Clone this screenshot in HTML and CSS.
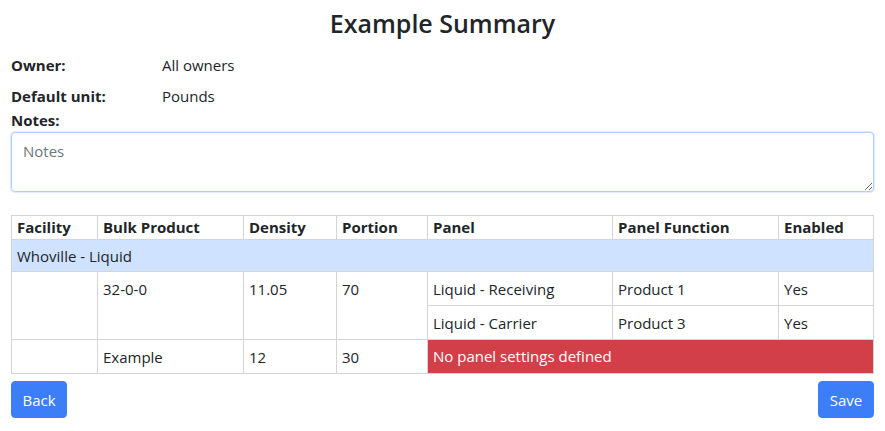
FILE: index.html
```html
<!DOCTYPE html>
<html lang="en">
<head>
<meta charset="utf-8">
<title>Example Summary</title>
<link rel="stylesheet" href="styles.css">
</head>
<body>
<main class="page">
  <h1 class="title">Example Summary</h1>
  <div class="info-row"><span class="info-label">Owner:</span><span class="info-value">All owners</span></div>
  <div class="info-row second"><span class="info-label">Default unit:</span><span class="info-value">Pounds</span></div>
  <label class="notes-label" for="notes">Notes:</label>
  <textarea id="notes" class="notes" placeholder="Notes"></textarea>
  <table class="summary">
    <colgroup>
      <col class="c1"><col class="c2"><col class="c3"><col class="c4"><col class="c5"><col class="c6"><col class="c7">
    </colgroup>
    <thead>
      <tr><th>Facility</th><th>Bulk Product</th><th>Density</th><th>Portion</th><th>Panel</th><th>Panel Function</th><th>Enabled</th></tr>
    </thead>
    <tbody>
      <tr class="group"><td colspan="7">Whoville - Liquid</td></tr>
      <tr><td rowspan="2"></td><td rowspan="2">32-0-0</td><td rowspan="2">11.05</td><td rowspan="2">70</td><td>Liquid - Receiving</td><td>Product 1</td><td>Yes</td></tr>
      <tr><td>Liquid - Carrier</td><td>Product 3</td><td>Yes</td></tr>
      <tr><td></td><td>Example</td><td>12</td><td>30</td><td colspan="3" class="danger">No panel settings defined</td></tr>
    </tbody>
  </table>
  <div class="actions">
    <button class="btn" type="button">Back</button>
    <button class="btn" type="button">Save</button>
  </div>
</main>
</body>
</html>
```

FILE: styles.css
```css
* { box-sizing: border-box; }
body {
  margin: 0;
  font-family: "Open Sans", "Noto Sans", sans-serif;
  font-size: 15px;
  color: #212529;
  background: #fff;
}
.page {
  padding: 0 11px;
}
.title {
  margin: 0;
  padding-top: 5px;
  height: 51px;
  text-align: center;
  font-size: 25px;
  font-weight: 600;
  line-height: 36px;
}
.info-row {
  display: flex;
  height: 28px;
  align-items: center;
}
.info-row.second {
  height: 34px;
}
.info-label {
  width: 151px;
  font-weight: 700;
}
.notes-label {
  display: block;
  font-weight: 700;
  line-height: 16px;
  height: 16px;
  margin-top: -1px;
}
.notes {
  display: block;
  width: 100%;
  height: 60px;
  margin: 4px 0 23px;
  padding: 8px 11px 5px;
  font: inherit;
  color: #212529;
  border: 1px solid #b3cdf8;
  border-radius: 4px;
  box-shadow: 0 0 0 1px rgba(13,110,253,0.12);
  outline: none;
  resize: vertical;
}
.notes::placeholder { color: #6c757d; opacity: 1; }
.summary {
  width: 100%;
  border-collapse: collapse;
  table-layout: fixed;
}
.c1 { width: 86px; }
.c2 { width: 146px; }
.c3 { width: 93px; }
.c4 { width: 91px; }
.c5 { width: 185px; }
.c6 { width: 166px; }
.c7 { width: auto; }
.summary th, .summary td {
  border: 1px solid #d4d4d4;
  text-align: left;
  vertical-align: top;
  padding: 0 5px;
  white-space: nowrap;
}
.summary th {
  height: 24px;
  line-height: 22px;
  font-weight: 700;
}
.summary td {
  height: 34px;
  line-height: 22px;
  padding-top: 6px;
}
.summary tr.group td {
  background: #cfe2ff;
  height: 32px;
  padding-top: 5px;
}
.summary td.danger {
  background: #d33f49;
  color: #fff;
  padding-top: 5px;
}
.actions {
  display: flex;
  justify-content: space-between;
  margin-top: 7px;
}
.btn {
  font: inherit;
  font-size: 15px;
  color: #fff;
  background: #3b7ef8;
  border: 1px solid #3b7ef8;
  border-radius: 4px;
  height: 37px;
  min-width: 56px;
  padding: 0 10px;
  cursor: pointer;
}
```
